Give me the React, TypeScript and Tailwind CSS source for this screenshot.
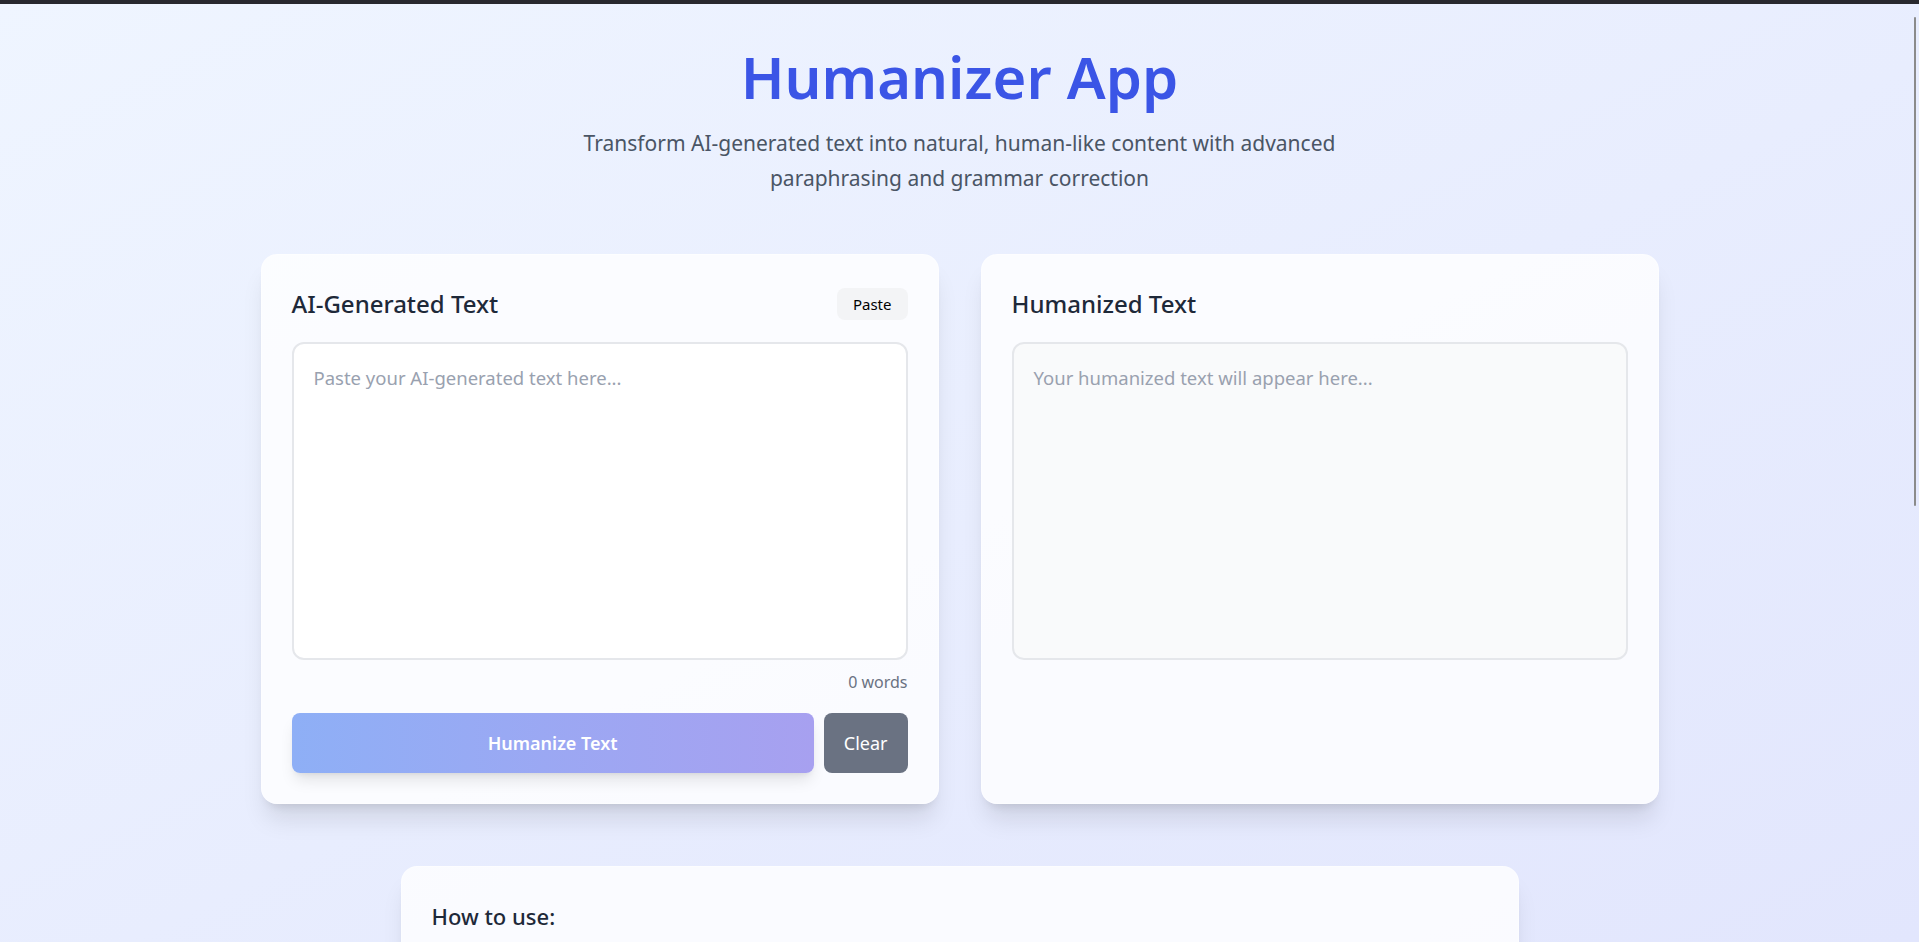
import { useState } from 'react';

const steps = [
  'Paste your AI-generated text into the left text area',
  'Click "Humanize Text" to transform your content',
  'Review the humanized result in the right panel',
  'Copy the output and use it wherever you need',
];

function CardHeader({ title, children }: { title: string; children?: React.ReactNode }) {
  return (
    <div className="flex items-center justify-between h-[33px] mb-[22px]">
      <h2 className="text-2xl font-medium text-[#1e2939]">{title}</h2>
      {children}
    </div>
  );
}

export default function App() {
  const [input, setInput] = useState('');
  const [output, setOutput] = useState('');

  const words = input.trim() ? input.trim().split(/\s+/).length : 0;

  return (
    <div className="relative h-screen overflow-hidden bg-linear-to-br from-[#eff5ff] to-[#e2e6fd] font-['Noto_Sans',sans-serif]">
      <div className="h-[4px] bg-[#28282e]"></div>

      {/* fake overlay scrollbar */}
      <div className="absolute right-[3px] top-[17px] h-[489px] w-[2px] rounded-full bg-[#8b8b8b]"></div>

      <div className="pt-[44px]">
        {/* Header */}
        <div className="text-center">
          <h1 className="text-[58px] leading-none font-semibold text-[#3b55e6] mb-[20px]">Humanizer App</h1>
          <p className="max-w-3xl mx-auto text-[21px] leading-[35px] text-[#4a5565] mb-[58px]">
            Transform AI-generated text into natural, human-like content with advanced paraphrasing and grammar correction
          </p>
        </div>

        {/* Panels */}
        <div className="grid grid-cols-2 gap-[42px] w-[1398px] mx-auto">
          <div className="bg-white/80 rounded-2xl shadow-xl border border-white/40 px-7.5 pt-8 pb-7.5">
            <CardHeader title="AI-Generated Text">
              <button className="px-4 py-1.5 text-[15px] leading-5 text-black bg-gray-100 rounded-lg">Paste</button>
            </CardHeader>
            <textarea
              value={input}
              onChange={e => setInput(e.target.value)}
              placeholder="Paste your AI-generated text here..."
              className="block w-full h-[318px] resize-none bg-white border-2 border-gray-200 rounded-xl p-5 text-[18.5px] text-gray-800 placeholder:text-gray-400 outline-none"
            />
            <div className="mt-2.5 text-right text-base text-gray-500">{words} words</div>
            <div className="flex gap-2.5 mt-[19px]">
              <button
                disabled={!input}
                onClick={() => setOutput(input)}
                className="flex-1 py-4 rounded-lg bg-linear-to-r from-[#8eaff6] to-[#a7a0f0] text-white text-lg font-semibold shadow-lg"
              >
                Humanize Text
              </button>
              <button
                onClick={() => { setInput(''); setOutput(''); }}
                className="px-5 py-4 rounded-lg bg-[#6a7282] text-white text-lg"
              >
                Clear
              </button>
            </div>
          </div>

          <div className="bg-white/80 rounded-2xl shadow-xl border border-white/40 px-7.5 pt-8 pb-7.5">
            <CardHeader title="Humanized Text" />
            <div className="h-[318px] bg-gray-50 border-2 border-gray-200 rounded-xl p-5 text-[18.5px]">
              {output ? (
                <span className="text-gray-800">{output}</span>
              ) : (
                <span className="text-gray-400">Your humanized text will appear here...</span>
              )}
            </div>
          </div>
        </div>

        {/* How to use */}
        <div className="w-[1118px] mx-auto mt-[62px] bg-white/80 rounded-2xl shadow-xl border border-white/40 px-7.5 pt-[33px] pb-8">
          <h3 className="text-[22px] font-medium text-[#1e2939] mb-4">How to use:</h3>
          <ol className="list-decimal list-inside space-y-2 text-gray-600">
            {steps.map((s, i) => (
              <li key={i}>{s}</li>
            ))}
          </ol>
        </div>
      </div>
    </div>
  );
}
